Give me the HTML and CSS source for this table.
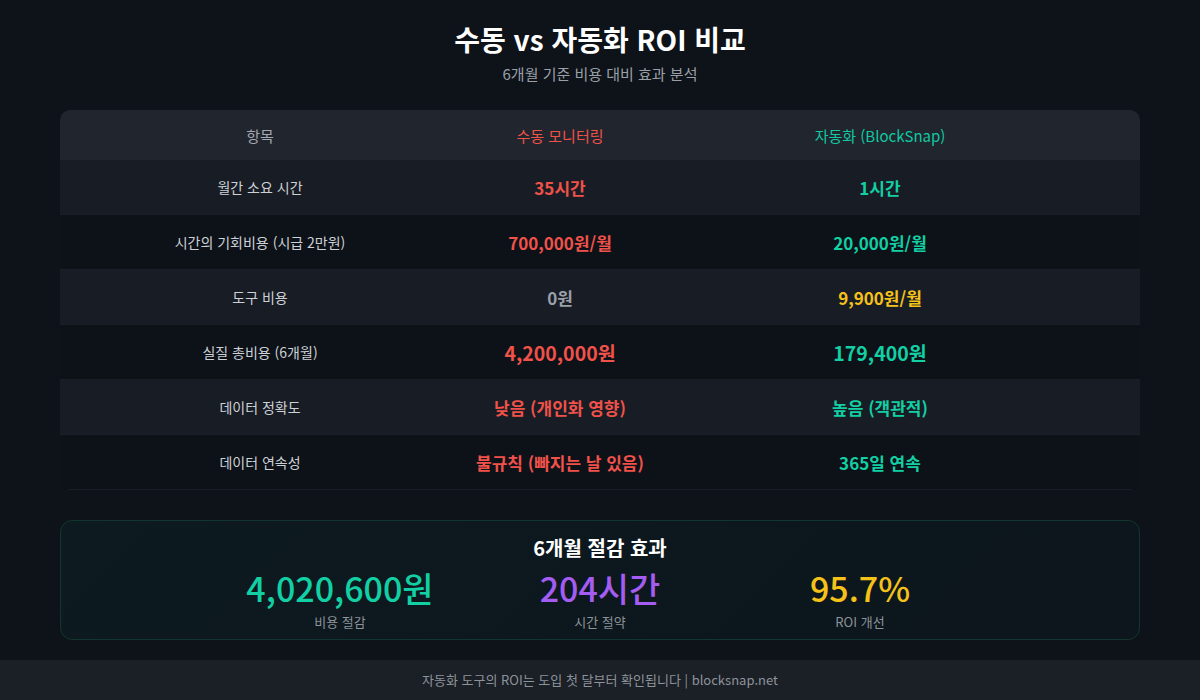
FILE: index.html
```html
<!DOCTYPE html>
<html lang="ko">
<head>
<meta charset="utf-8">
<link rel="stylesheet" href="styles.css">
</head>
<body>
<div class="page">
  <header class="top">
    <h1 class="title">수동 vs 자동화 ROI 비교</h1>
    <p class="subtitle">6개월 기준 비용 대비 효과 분석</p>
  </header>

  <div class="table">
    <div class="row head">
      <div class="cell label">항목</div>
      <div class="cell red-h">수동 모니터링</div>
      <div class="cell teal-h">자동화 (BlockSnap)</div>
    </div>
    <div class="row odd">
      <div class="cell label">월간 소요 시간</div>
      <div class="cell val red">35시간</div>
      <div class="cell val teal">1시간</div>
    </div>
    <div class="row even">
      <div class="cell label">시간의 기회비용 (시급 2만원)</div>
      <div class="cell val red">700,000원/월</div>
      <div class="cell val teal">20,000원/월</div>
    </div>
    <div class="row odd">
      <div class="cell label">도구 비용</div>
      <div class="cell val gray">0원</div>
      <div class="cell val yellow">9,900원/월</div>
    </div>
    <div class="row even">
      <div class="cell label">실질 총비용 (6개월)</div>
      <div class="cell val big red">4,200,000원</div>
      <div class="cell val big teal">179,400원</div>
    </div>
    <div class="row odd">
      <div class="cell label">데이터 정확도</div>
      <div class="cell val red">낮음 (개인화 영향)</div>
      <div class="cell val teal">높음 (객관적)</div>
    </div>
    <div class="row even">
      <div class="cell label">데이터 연속성</div>
      <div class="cell val red">불규칙 (빠지는 날 있음)</div>
      <div class="cell val teal">365일 연속</div>
    </div>
  </div>

  <section class="summary">
    <h2 class="sum-title">6개월 절감 효과</h2>
    <div class="stats">
      <div class="stat">
        <div class="num teal">4,020,600원</div>
        <div class="cap">비용 절감</div>
      </div>
      <div class="stat">
        <div class="num purple">204시간</div>
        <div class="cap">시간 절약</div>
      </div>
      <div class="stat">
        <div class="num yellow">95.7%</div>
        <div class="cap">ROI 개선</div>
      </div>
    </div>
  </section>
</div>
<footer class="foot">자동화 도구의 ROI는 도입 첫 달부터 확인됩니다 | blocksnap.net</footer>
</body>
</html>
```

FILE: styles.css
```css
* { box-sizing: border-box; }
html, body { margin: 0; padding: 0; }
body {
  width: 1200px;
  height: 700px;
  overflow: hidden;
  background: #0e1219;
  font-family: "Noto Sans CJK KR", "Noto Sans", sans-serif;
  color: #e5e7eb;
  display: flex;
  flex-direction: column;
}
.page {
  flex: 1;
  padding: 0 60px;
  display: flex;
  flex-direction: column;
}
.top {
  text-align: center;
  padding-top: 20px;
}
.title {
  margin: 0;
  font-size: 28px;
  font-weight: 700;
  color: #ffffff;
  line-height: 38px;
}
.subtitle {
  margin: 5px 0 0;
  font-size: 15px;
  color: #9aa0a8;
  line-height: 22px;
}
.table {
  margin-top: 25px;
  border-radius: 10px;
  overflow: hidden;
}
.row {
  display: grid;
  grid-template-columns: 400px 200px 440px 1fr;
  height: 55px;
  align-items: center;
  border-bottom: 1px solid #1a1f27;
}
.row.head {
  height: 50px;
  background: #20252e;
  border-bottom: none;
}
.row.odd { background: #181c24; }
.row.even { background: #0d1118; }
.cell {
  text-align: center;
  white-space: nowrap;
}
.head .cell { font-size: 15px; }
.head .label { color: #a3a8b0; }
.red-h { color: #f0524a; }
.teal-h { color: #12c9a1; }
.label {
  font-size: 14px;
  color: #cdd1d6;
}
.val {
  font-size: 17px;
  font-weight: 700;
}
.val.big { font-size: 19.5px; }
.red { color: #f0524a; }
.teal { color: #12cfa4; }
.gray { color: #9aa0a8; }
.yellow { color: #f6c21a; }
.purple { color: #a45cf2; }

.summary {
  margin-top: 30px;
  height: 120px;
  border: 1px solid #12352f;
  border-radius: 12px;
  background: linear-gradient(135deg, #0d1a20 0%, #0c161c 100%);
  text-align: center;
  padding-top: 14px;
}
.sum-title {
  margin: 0;
  font-size: 20px;
  font-weight: 700;
  color: #ffffff;
  line-height: 26px;
}
.stats {
  display: grid;
  grid-template-columns: repeat(3, 260px);
  justify-content: center;
  margin-top: 7px;
}
.num {
  font-size: 34px;
  font-weight: 500;
  line-height: 40px;
}
.cap {
  font-size: 13px;
  color: #8d939b;
  line-height: 18px;
  margin-top: 5px;
}
.foot {
  height: 40px;
  background: #1b1f26;
  color: #8d939b;
  font-size: 13px;
  text-align: center;
  line-height: 40px;
}
```
